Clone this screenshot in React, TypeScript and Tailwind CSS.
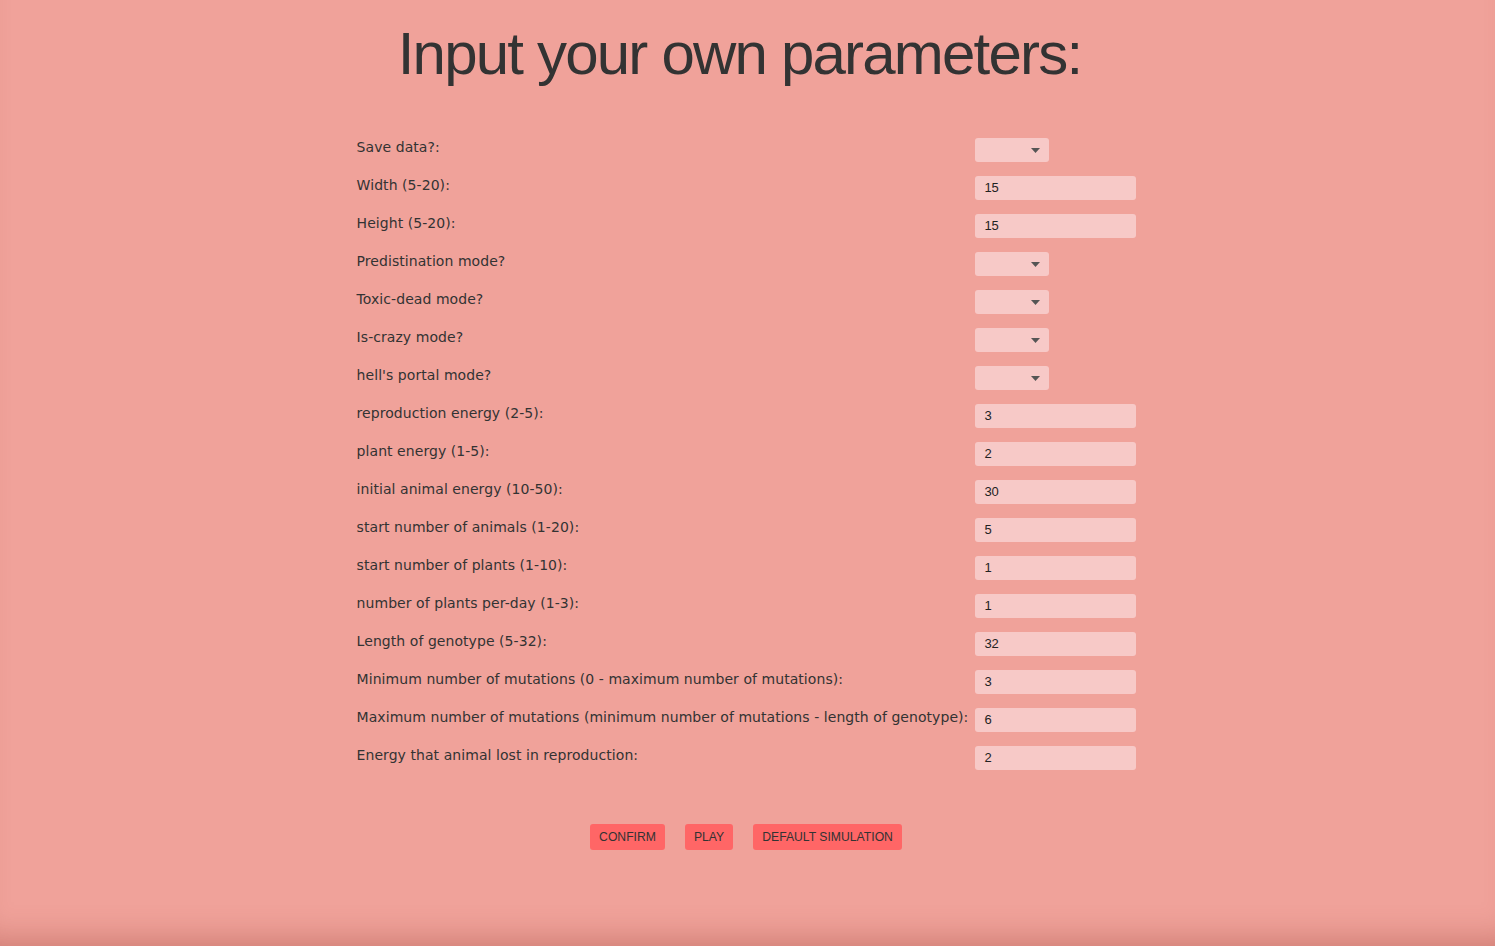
import React from "react";

type Row = { label: string; kind: "select" | "input"; value?: string };

const rows: Row[] = [
  { label: "Save data?:", kind: "select" },
  { label: "Width (5-20):", kind: "input", value: "15" },
  { label: "Height (5-20):", kind: "input", value: "15" },
  { label: "Predistination mode?", kind: "select" },
  { label: "Toxic-dead mode?", kind: "select" },
  { label: "Is-crazy mode?", kind: "select" },
  { label: "hell's portal mode?", kind: "select" },
  { label: "reproduction energy (2-5):", kind: "input", value: "3" },
  { label: "plant energy (1-5):", kind: "input", value: "2" },
  { label: "initial animal energy (10-50):", kind: "input", value: "30" },
  { label: "start number of animals (1-20):", kind: "input", value: "5" },
  { label: "start number of plants (1-10):", kind: "input", value: "1" },
  { label: "number of plants per-day (1-3):", kind: "input", value: "1" },
  { label: "Length of genotype (5-32):", kind: "input", value: "32" },
  { label: "Minimum number of mutations (0 - maximum number of mutations):", kind: "input", value: "3" },
  { label: "Maximum number of mutations (minimum number of mutations - length of genotype):", kind: "input", value: "6" },
  { label: "Energy that animal lost in reproduction:", kind: "input", value: "2" },
];

export default function App() {
  return (
    <div className="w-[1495px] h-[946px] bg-[#f0a29a] flex flex-col items-center overflow-hidden shadow-[inset_0_-30px_30px_-22px_rgba(150,60,50,0.35)]">
      <h1 className="mt-[18px] mr-[16px] text-[60px] leading-[72px] text-[#333333] font-['Liberation_Sans',Arial,sans-serif] tracking-[-1.8px]">
        Input your own parameters:
      </h1>
      <div className="mt-[48px] mr-[2px] grid grid-cols-[auto_161px] gap-x-[7px] gap-y-[14px] font-['DejaVu_Sans',Verdana,sans-serif] text-[14px] tracking-[0.06px] text-[#333333]">
        {rows.map((r, i) => (
          <React.Fragment key={i}>
            <div className="h-[24px] leading-[18px] whitespace-nowrap">{r.label}</div>
            <div className="h-[24px] flex items-center">
              {r.kind === "select" ? (
                <div className="w-[74px] h-[24px] rounded-[3px] bg-[#f7c9c7] flex items-center justify-end pr-[9px]">
                  <svg width="9" height="5" viewBox="0 0 9 5">
                    <path d="M0 0 L9 0 L4.5 5 Z" fill="#555555" />
                  </svg>
                </div>
              ) : (
                <div className="w-[161px] h-[24px] rounded-[3px] bg-[#f7c9c7] flex items-center pl-[9px] font-['Liberation_Sans',Arial,sans-serif] text-[13px] tracking-normal text-[#222222]">
                  {r.value}
                </div>
              )}
            </div>
          </React.Fragment>
        ))}
      </div>
      <div className="mt-[54px] mr-[3px] flex gap-[20px] font-['Liberation_Sans',Arial,sans-serif] text-[12.2px] text-[#333333]">
        <button className="h-[26px] px-[9px] rounded-[3px] bg-[#ff6666]">CONFIRM</button>
        <button className="h-[26px] px-[9px] rounded-[3px] bg-[#ff6666]">PLAY</button>
        <button className="h-[26px] px-[9px] rounded-[3px] bg-[#ff6666]">DEFAULT SIMULATION</button>
      </div>
    </div>
  );
}
